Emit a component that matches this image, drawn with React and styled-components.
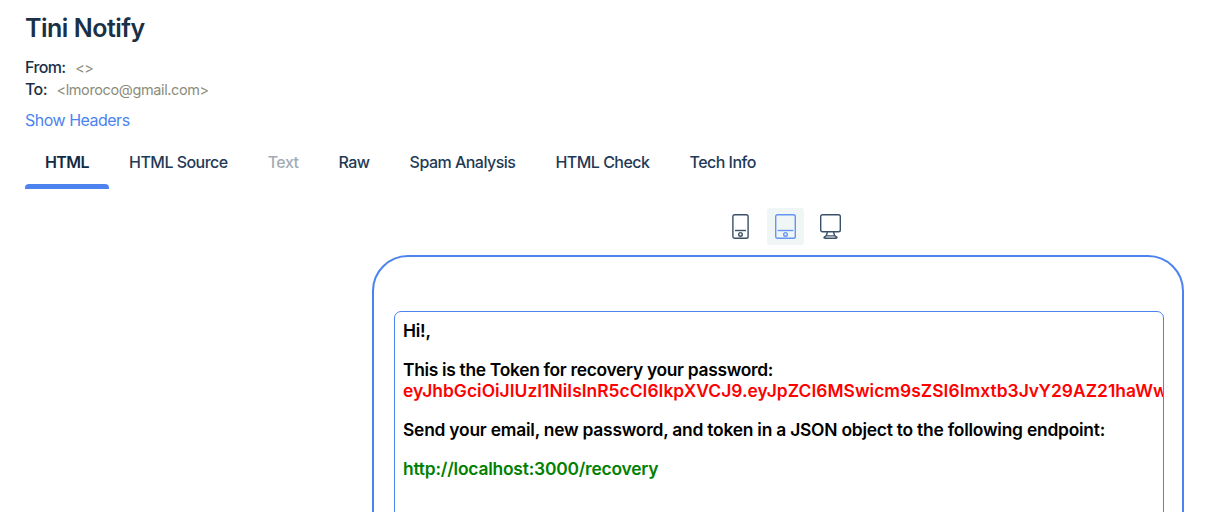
import React from 'react';
import styled, { createGlobalStyle, css } from 'styled-components';

const GlobalStyle = createGlobalStyle`
  * { box-sizing: border-box; }
  body { margin: 0; background: #fff; overflow: hidden; font-family: Inter, "Liberation Sans", sans-serif; color: #1a3047; }
`;
const Page = styled.main`
  width: 1210px; height: 512px; overflow: hidden; padding: 10px 26px 0 25px;
`;
const Title = styled.h1`
  margin: 0 0 9px; font-size: 25px; line-height: 37px; font-weight: 600; letter-spacing: -0.5px;
`;
const Line = styled.div`
  display: flex; align-items: baseline; gap: 9.5px; height: 22px; line-height: 22px; font-size: 16px; white-space: nowrap;
`;
const Label = styled.span`
  font-weight: 500; letter-spacing: -0.6px;
`;
const Address = styled.span`
  font-size: 14.5px; color: #8c8c7a; letter-spacing: -0.38px;
`;
const HeadersLink = styled.a`
  display: block; margin-top: 9px; font-size: 16px; line-height: 22px; color: #4c83ee; letter-spacing: -0.5px;
`;
const Tabs = styled.nav`
  display: flex; margin-top: 11px; height: 47px;
`;
const Tab = styled.a`
  padding: 9px 20px 0; font-size: 16px; line-height: 22px; font-weight: 450; letter-spacing: -0.52px; white-space: nowrap;
  color: ${p => (p.$muted ? '#a3acb5' : '#1f3a56')};
  ${p => p.$active && css`
    font-weight: 600; letter-spacing: -0.58px; color: #122a42;
    &::after { content: ""; display: block; height: 5px; margin: 11px -20px 0; background: #4c83ee; border-radius: 4px 4px 0 0; }
  `}
`;
const Devices = styled.div`
  display: flex; gap: 8px; margin: 19px 0 0 697px;
`;
const DeviceButton = styled.button`
  width: 37px; height: 37px; padding: 0; border: 0; border-radius: 3px; display: grid; place-items: center;
  background: ${p => (p.$active ? '#f0f5f5' : 'transparent')};
  color: ${p => (p.$active ? '#6495f0' : '#3a5068')};
`;
const Tablet = styled.section`
  width: 812px; height: 600px; margin: 10px 0 0 347px; padding: 54px 18px 54px 20px; border: 2px solid #4c83ee; border-radius: 36px;
`;
const Screen = styled.article`
  width: 770px; height: 500px; padding: 8px; border: 1px solid #4c83ee; border-radius: 7px; overflow: hidden;
  color: #000; font-size: 17.4px; line-height: 21px; font-weight: 600; white-space: nowrap;
`;
const Paragraph = styled.p`
  margin: 0 0 18px; letter-spacing: ${p => p.$spacing || '-0.22px'};
`;
const Token = styled.span`
  display: block; color: #f00; letter-spacing: 0.03px;
`;
const Payload = styled.span`
  letter-spacing: 0.05px;
`;
const Endpoint = styled.span`
  color: green;
`;

const icon = { fill: 'none', stroke: 'currentColor', strokeWidth: 1.4 };
const PhoneIcon = () => (
  <svg width="17" height="25" viewBox="0 0 17 25" {...icon}><rect x=".9" y=".7" width="15.2" height="23.6" rx="1.8" /><path d="M3 16.5h11" /><circle cx="8.5" cy="20.4" r="1.8" /></svg>
);
const TabletIcon = () => (
  <svg width="21" height="25" viewBox="0 0 21 25" {...icon}><rect x=".7" y=".7" width="19.6" height="23.6" rx="1.8" /><path d="M2.7 16.5h15.6" /><circle cx="10.5" cy="20.4" r="1.8" /></svg>
);
const DesktopIcon = () => (
  <svg width="21" height="25" viewBox="0 0 21 25" {...icon}><rect x=".7" y=".7" width="19.6" height="17" rx="1.8" /><path d="M7.4 18l-1 3.8M13.6 18l1 3.8" /><path d="M6 21.9h9l1.9 1.5q.2.9-1 .9H5.1q-1.2 0-1-.9z" strokeLinejoin="round" /></svg>
);
const tabs = [
  { name: 'HTML', $active: true }, { name: 'HTML Source' }, { name: 'Text', $muted: true }, { name: 'Raw' },
  { name: 'Spam Analysis' }, { name: 'HTML Check' }, { name: 'Tech Info' },
];

export default function App() {
  return (
    <Page>
      <GlobalStyle />
      <Title>Tini Notify</Title>
      <Line><Label>From:</Label><Address>&lt;&gt;</Address></Line>
      <Line><Label>To:</Label><Address>&lt;lmoroco@gmail.com&gt;</Address></Line>
      <HeadersLink>Show Headers</HeadersLink>
      <Tabs>{tabs.map(({ name, ...state }) => <Tab key={name} {...state}>{name}</Tab>)}</Tabs>
      <Devices>
        <DeviceButton aria-label="Phone"><PhoneIcon /></DeviceButton>
        <DeviceButton aria-label="Tablet" $active><TabletIcon /></DeviceButton>
        <DeviceButton aria-label="Desktop"><DesktopIcon /></DeviceButton>
      </Devices>
      <Tablet>
        <Screen>
          <Paragraph>Hi!,</Paragraph>
          <Paragraph $spacing="-0.31px">This is the Token for recovery your password:
            <Token>eyJhbGciOiJIUzI1NiIsInR5cCI6IkpXVCJ9.<Payload>eyJpZCI6MSwicm9sZSI6Imxtb3JvY29AZ21haWw</Payload></Token>
          </Paragraph>
          <Paragraph>Send your email, new password, and token in a JSON object to the following endpoint:</Paragraph>
          <Paragraph $spacing="-0.2px"><Endpoint>http://localhost:3000/recovery</Endpoint></Paragraph>
        </Screen>
      </Tablet>
    </Page>
  );
}
